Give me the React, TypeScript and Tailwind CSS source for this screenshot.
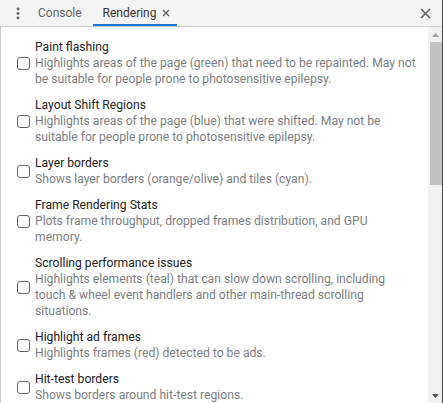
import React from 'react';

const items = [
  {
    title: 'Paint flashing',
    desc: 'Highlights areas of the page (green) that need to be repainted. May not be suitable for people prone to photosensitive epilepsy.',
  },
  {
    title: 'Layout Shift Regions',
    desc: 'Highlights areas of the page (blue) that were shifted. May not be suitable for people prone to photosensitive epilepsy.',
  },
  {
    title: 'Layer borders',
    desc: 'Shows layer borders (orange/olive) and tiles (cyan).',
  },
  {
    title: 'Frame Rendering Stats',
    desc: 'Plots frame throughput, dropped frames distribution, and GPU memory.',
  },
  {
    title: 'Scrolling performance issues',
    desc: 'Highlights elements (teal) that can slow down scrolling, including touch & wheel event handlers and other main-thread scrolling situations.',
  },
  {
    title: 'Highlight ad frames',
    desc: 'Highlights frames (red) detected to be ads.',
  },
  {
    title: 'Hit-test borders',
    desc: 'Shows borders around hit-test regions.',
  },
];

const App = () => {
  return (
    <div
      className="flex flex-col w-[443px] h-[403px] overflow-hidden bg-white border-r border-[#4a4a4a]"
      style={{ fontFamily: 'Roboto, "Noto Sans", sans-serif' }}
    >
      {/* tab strip */}
      <div className="flex items-stretch h-[27px] shrink-0 bg-[#f3f3f3] border-b border-[#cbcdd1] text-[12px]">
        <div className="w-[34px] flex items-center justify-center pl-[1px]">
          <svg width="4" height="13" viewBox="0 0 4 13">
            <circle cx="2" cy="2" r="1.4" fill="#5f6368" />
            <circle cx="2" cy="6.5" r="1.4" fill="#5f6368" />
            <circle cx="2" cy="11" r="1.4" fill="#5f6368" />
          </svg>
        </div>
        <div className="flex items-center pl-[4px] pr-[11px] text-[#5f6368]">Console</div>
        <div className="relative flex items-center pl-[10px] pr-[7px] text-[#333333]">
          <span>Rendering</span>
          <svg className="ml-[6px]" width="8" height="8" viewBox="0 0 8 8">
            <path d="M1 1 L7 7 M7 1 L1 7" stroke="#5f6368" strokeWidth="1.4" />
          </svg>
          <div className="absolute left-0 right-0 bottom-0 h-[2px] bg-[#1a73e8]" />
        </div>
        <div className="flex-1" />
        <div className="w-[32px] flex items-center justify-center pr-[2px]">
          <svg width="11" height="11" viewBox="0 0 11 11">
            <path d="M1 1 L10 10 M10 1 L1 10" stroke="#5f6368" strokeWidth="1.6" />
          </svg>
        </div>
      </div>

      {/* body */}
      <div className="flex flex-1 min-h-0">
        <div className="flex-1 border-l border-[#cccccc] pt-[12px] flex flex-col gap-[10px]">
          {items.map((item) => (
            <div key={item.title} className="flex items-center pl-[16px]">
              <div className="w-[13px] h-[13px] shrink-0 rounded-[3px] border border-[#5f6368] bg-white" />
              <div className="ml-[5px] w-[382px] text-[12.15px] leading-[16px]">
                <div className="text-[#202124]">{item.title}</div>
                <div className="text-[#7b7e82]">{item.desc}</div>
              </div>
            </div>
          ))}
        </div>

        {/* scrollbar */}
        <div className="w-[14px] shrink-0 bg-[#f1f1f1] flex flex-col">
          <div className="h-[15px] flex items-center justify-center">
            <svg width="7" height="4" viewBox="0 0 7 4">
              <path d="M0 4 L3.5 0 L7 4 Z" fill="#a3a3a3" />
            </svg>
          </div>
          <div className="ml-[2px] h-[143px] bg-[#c1c1c1]" />
          <div className="flex-1" />
          <div className="h-[15px] flex items-center justify-center">
            <svg width="7" height="4" viewBox="0 0 7 4">
              <path d="M0 0 L7 0 L3.5 4 Z" fill="#505050" />
            </svg>
          </div>
        </div>
      </div>
    </div>
  );
};

export default App;
